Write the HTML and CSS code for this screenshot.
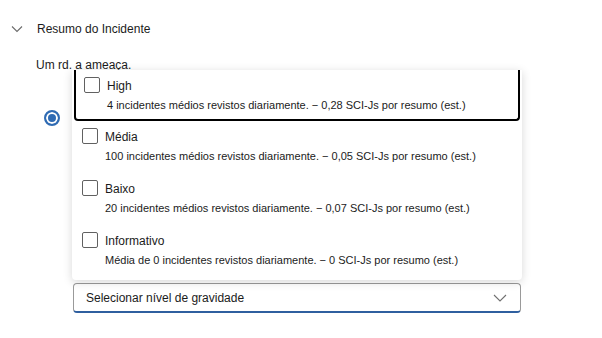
FILE: index.html
```html
<!DOCTYPE html>
<html lang="pt">
<head>
    <meta charset="UTF-8">
    <title>Resumo do Incidente</title>
    <link rel="stylesheet" href="styles.css">
</head>
<body>
    <div class="section">
        <div class="section-header">
            <svg class="chevron" width="12" height="8" viewBox="0 0 12 8"><path d="M1 1.5 L6 6.5 L11 1.5" fill="none" stroke="#6b6b6b" stroke-width="1.1"/></svg>
            <span class="section-title">Resumo do Incidente</span>
        </div>
        <div class="section-body">
            <p class="hint">Um rd. a ameaça.</p>
            <div class="radio-row">
                <span class="radio"></span>
            </div>
            <div class="field">
                <div class="dropdown">
                    <div class="option focused">
                        <span class="checkbox"></span>
                        <div class="option-text">
                            <div class="option-title">High</div>
                            <div class="option-desc">4 incidentes médios revistos diariamente. − 0,28 SCI-Js por resumo (est.)</div>
                        </div>
                    </div>
                    <div class="option">
                        <span class="checkbox"></span>
                        <div class="option-text">
                            <div class="option-title">Média</div>
                            <div class="option-desc">100 incidentes médios revistos diariamente. − 0,05 SCI-Js por resumo (est.)</div>
                        </div>
                    </div>
                    <div class="option">
                        <span class="checkbox"></span>
                        <div class="option-text">
                            <div class="option-title">Baixo</div>
                            <div class="option-desc">20 incidentes médios revistos diariamente. − 0,07 SCI-Js por resumo (est.)</div>
                        </div>
                    </div>
                    <div class="option">
                        <span class="checkbox"></span>
                        <div class="option-text">
                            <div class="option-title">Informativo</div>
                            <div class="option-desc">Média de 0 incidentes revistos diariamente. − 0 SCI-Js por resumo (est.)</div>
                        </div>
                    </div>
                </div>
                <div class="select">
                    <span>Selecionar nível de gravidade</span>
                    <svg width="14" height="8" viewBox="0 0 14 8"><path d="M1 1 L7 7 L13 1" fill="none" stroke="#707070" stroke-width="1.1"/></svg>
                </div>
            </div>
        </div>
    </div>
</body>
</html>
```

FILE: styles.css
```css
body {
    margin: 0;
    font-family: "Liberation Sans", Arial, sans-serif;
    color: #1b1b1b;
    background: #fff;
}
.section {
    padding: 19px 0 0 11px;
}
.section-header {
    display: flex;
    align-items: center;
    height: 20px;
    gap: 14px;
}
.section-title {
    font-size: 12px;
}
.section-body {
    padding-left: 25px;
}
.hint {
    margin: 18px 0 0;
    font-size: 12px;
    line-height: 16px;
}
.radio-row {
    margin: 37px 0 0 8px;
    height: 16px;
}
.radio {
    display: block;
    width: 12px;
    height: 12px;
    border: 2px solid #2f6bb3;
    border-radius: 50%;
    background: #2f6bb3;
    box-shadow: inset 0 0 0 2px #fff;
}
.field {
    position: relative;
    margin: 157px 0 0 37px;
    width: 448px;
}
.dropdown {
    position: absolute;
    left: -1px;
    bottom: calc(100% + 3px);
    width: 450px;
    height: 210px;
    background: #fff;
    border-radius: 0 0 4px 4px;
    box-shadow: 0 2px 10px rgba(0, 0, 0, 0.16);
    overflow: hidden;
}
.option {
    display: flex;
    height: 52px;
    box-sizing: border-box;
    padding: 7px 0 0 10px;
    gap: 7px;
}
.option.focused {
    height: 51px;
    margin: 0 2px;
    padding-left: 8px;
    border: 2px solid #000;
    border-top: 0;
    border-radius: 0 0 4px 4px;
}
.checkbox {
    flex: none;
    width: 14px;
    height: 14px;
    border: 1px solid #616161;
    border-radius: 2px;
}
.option-title {
    font-size: 12px;
    line-height: 18px;
}
.option-desc {
    margin-top: 2px;
    font-size: 11px;
    line-height: 16px;
}
.select {
    display: flex;
    align-items: center;
    justify-content: space-between;
    height: 30px;
    box-sizing: border-box;
    padding: 0 13px 0 12px;
    border: 1px solid #9a9a9a;
    border-bottom: 2px solid #2f5f9f;
    border-radius: 4px;
    font-size: 12px;
}
```
